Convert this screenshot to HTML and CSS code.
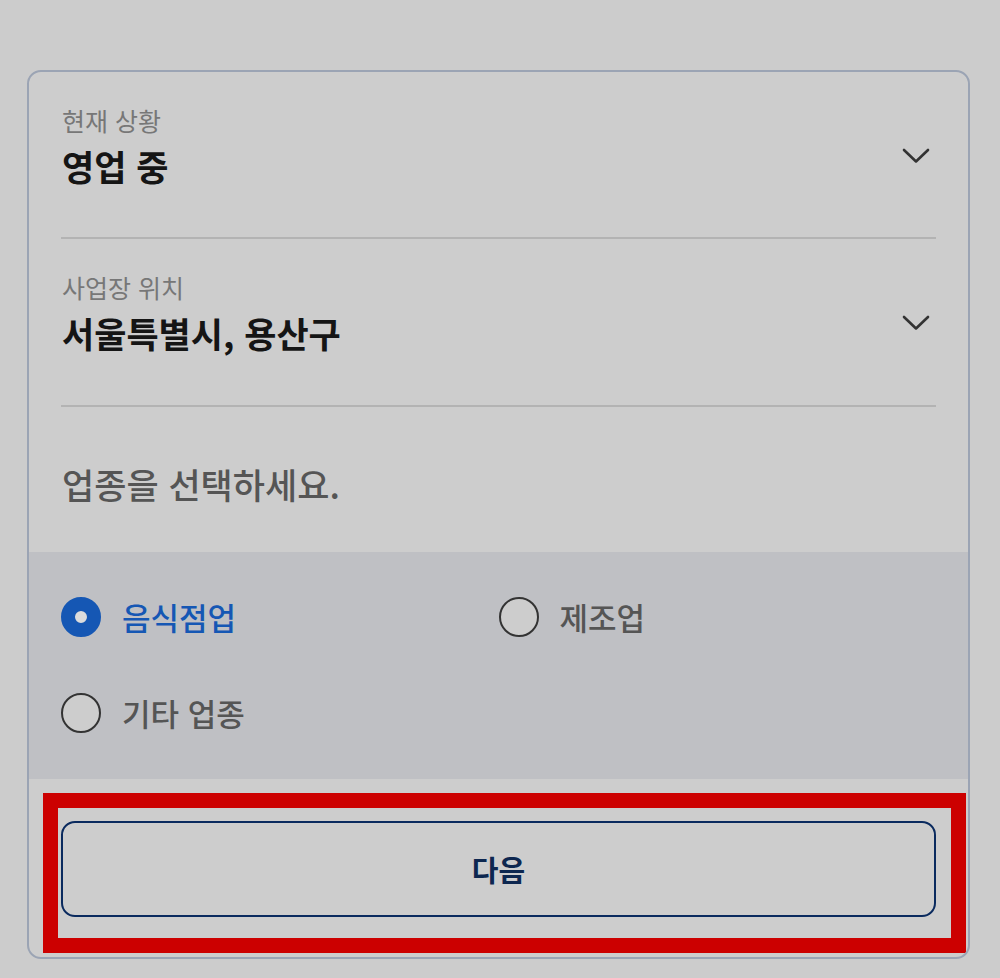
FILE: index.html
```html
<!DOCTYPE html>
<html lang="ko">
<head>
<meta charset="utf-8">
<link rel="stylesheet" href="styles.css">
</head>
<body>
<div class="card">
  <div class="field">
    <div class="field-text">
      <div class="label">현재 상황</div>
      <div class="value">영업 중</div>
    </div>
    <svg class="chev" width="28" height="16" viewBox="0 0 28 16"><polyline points="2,2 14,13.5 26,2" fill="none" stroke="#333" stroke-width="2.6" stroke-linecap="round" stroke-linejoin="round"/></svg>
  </div>
  <div class="divider"></div>
  <div class="field field-second">
    <div class="field-text">
      <div class="label">사업장 위치</div>
      <div class="value">서울특별시, 용산구</div>
    </div>
    <svg class="chev" width="28" height="16" viewBox="0 0 28 16"><polyline points="2,2 14,13.5 26,2" fill="none" stroke="#333" stroke-width="2.6" stroke-linecap="round" stroke-linejoin="round"/></svg>
  </div>
  <div class="divider"></div>
  <div class="heading">업종을 선택하세요.</div>
  <div class="options">
    <div class="option selected"><span class="radio"></span><span class="opt-text">음식점업</span></div>
    <div class="option"><span class="radio"></span><span class="opt-text">제조업</span></div>
    <div class="option"><span class="radio"></span><span class="opt-text">기타 업종</span></div>
  </div>
  <div class="footer">
    <button class="next">다음</button>
    <div class="highlight"></div>
  </div>
</div>
</body>
</html>
```
FILE: styles.css
```css
html, body {
  margin: 0;
  background: #cccccc;
}
body {
  padding: 70px 0 0 27px;
  font-family: "Noto Sans CJK KR", "Noto Sans", sans-serif;
}
.card {
  width: 943px;
  box-sizing: border-box;
  border: 2px solid #9ba4b4;
  border-radius: 14px;
  background: #cdcdcd;
  overflow: hidden;
}
.field {
  display: flex;
  justify-content: space-between;
  padding: 33px 38px 49px 33px;
}
.field-second {
  padding-bottom: 50px;
}
.label {
  font-size: 25px;
  line-height: 30px;
  color: #777;
  margin-bottom: 9px;
}
.value {
  font-size: 35px;
  line-height: 44px;
  font-weight: 600;
  color: #151515;
}
.chev {
  align-self: center;
  margin-top: 19px;
}
.divider {
  height: 2px;
  background: #b3b3b3;
  margin: 0 32px;
}
.heading {
  padding: 55px 33px 46px;
  font-size: 35px;
  line-height: 44px;
  font-weight: 500;
  color: #555;
}
.options {
  background: #bfc0c4;
  display: grid;
  grid-template-columns: 1fr 1fr;
  row-gap: 56px;
  padding: 45px 32px 46px;
}
.option {
  display: flex;
  align-items: center;
  height: 40px;
  gap: 21px;
}
.radio {
  width: 40px;
  height: 40px;
  box-sizing: border-box;
  border-radius: 50%;
  border: 2px solid #333;
  background: #cdcdcd;
  flex: none;
}
.selected .radio {
  border: 14px solid #1557b4;
  background: #dcdcdc;
}
.opt-text {
  font-size: 31px;
  line-height: 40px;
  color: #555;
  font-weight: 500;
}
.selected .opt-text {
  color: #1557b4;
}
.footer {
  position: relative;
  padding: 42px 32px 40px;
}
.next {
  display: block;
  width: 100%;
  height: 96px;
  box-sizing: border-box;
  border: 2px solid #0a2a5e;
  border-radius: 14px;
  background: #cdcdcd;
  font-family: "Noto Sans CJK KR", "Noto Sans", sans-serif;
  font-size: 29px;
  font-weight: 700;
  color: #0d2750;
}
.highlight {
  position: absolute;
  left: 14px;
  top: 14px;
  width: 923px;
  height: 160px;
  box-sizing: border-box;
  border: 15px solid #cc0000;
  pointer-events: none;
}
```
